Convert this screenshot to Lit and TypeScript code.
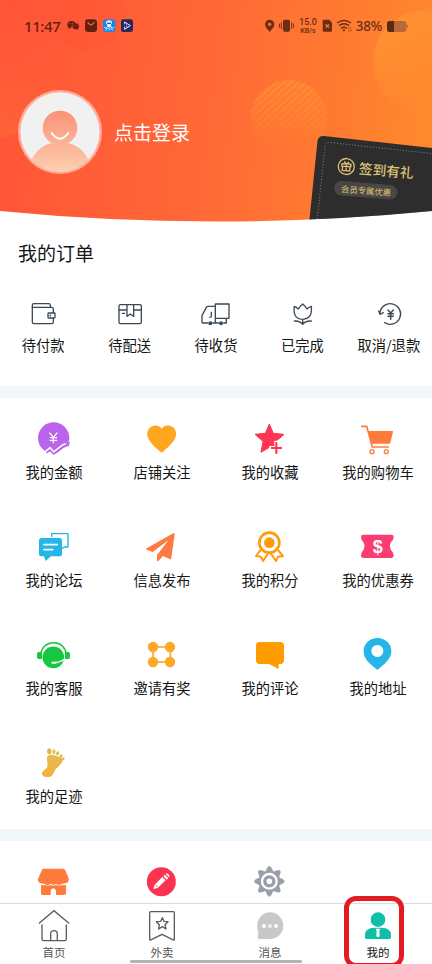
import { LitElement, html, svg, css } from "lit";
import { customElement, property } from "lit/decorators.js";

const CJK = css`"Noto Sans CJK SC", sans-serif`;

/* ---- status bar glyphs ---- */
const statusIcon = (x: number, w: number, body: unknown) =>
  html`<svg width=${w / 3} height="16" viewBox="${x} 54 ${w} 48">${body}</svg>`;

const DARK = "#64200f";
const BROWN = "#6d2f14";

const wechat = statusIcon(198, 54, svg`
  <path fill=${DARK} d="M214 63c8 0 12 4 12 8-9 0-13 5-12 13l-4 0-5 3 1-5c-4-2-4-5-4-8 0-6 5-11 12-11z"/>
  <path fill=${DARK} d="M227 70c6 0 10 4 10 9 0 3-1 5-3 7l1 4-5-2c-8 1-13-3-13-9 0-5 4-9 10-9z"/>
  <g fill="#ff5535"><circle cx="210" cy="70" r="1.6"/><circle cx="218" cy="70" r="1.6"/><circle cx="223" cy="77" r="1.4"/><circle cx="231" cy="77" r="1.4"/></g>`);
const bag = statusIcon(252, 54, svg`
  <rect x="255" y="58" width="36" height="38" rx="9" fill=${DARK}/>
  <path d="M264 68q9 13 18 0" fill="none" stroke="#ff6840" stroke-width="3.4" stroke-linecap="round"/>`);
const octo = statusIcon(306, 54, svg`
  <rect x="309" y="58" width="37" height="38" rx="9" fill="#1b86e8"/>
  <path d="M322 80l-3 5-7-3M333 80l3 5 7-3M323 84l-6 8M332 84l6 8M327.500 80v12" fill="none" stroke="#dff2ff" stroke-width="2.600"/>
  <path d="M327 61c6 0 10 4 9 9l-3 3 1 8h-13l1-7-4-3c-1-6 3-10 9-10z" fill="#dff2ff"/><path d="M321 68h12v4h-12z" fill="#1b62b8"/>`);
const play = statusIcon(360, 54, svg`
  <rect x="363" y="58" width="36" height="38" rx="7" fill="#26285c"/>
  <path d="M374 73v-7l17 11-17 11v-8" fill="none" stroke="#eceaff" stroke-width="3"/><path d="M380 73v10" stroke="#8f9cff" stroke-width="3"/>`);
const pin = statusIcon(138, 42, svg`
  <path fill=${BROWN} fill-rule="evenodd" d="M161 59c8 0 14 6 14 14 0 9-9 16-14 23-5-7-14-14-14-23 0-8 6-14 14-14zm0 9a5 5 0 1 0 .1 0z"/>`);
const vibrate = statusIcon(180, 60, svg`
  <rect x="201" y="59" width="21" height="36" rx="5" fill=${BROWN}/>
  <path d="M196 67v20M227 67v20M190.500 71v12M232.500 71v12" stroke=${BROWN} stroke-width="2.800"/>`);
const sim = statusIcon(312, 45, svg`
  <path fill=${BROWN} d="M323 59h17l8 9v24q0 3-3 3h-22q-3 0-3-3v-30q0-3 3-3z"/>
  <path d="M329 73l10 10m0-10l-10 10" stroke="#ff8a40" stroke-width="3.200"/>`);
const wifi = statusIcon(357, 54, svg`
  <g fill="none" stroke=${BROWN} stroke-width="4.500"><path d="M363 69q21-15 42 0"/><path d="M369 77q15-11 30 0"/><path d="M375 85q9-7 17 0"/></g>
  <path fill=${BROWN} d="M379 89q5-3 9 0l-4 6z"/><path d="M397 83v4M403 82v4M399 91v4M405 89v4" stroke=${BROWN} stroke-width="2.500"/>`);
const battery = statusIcon(507, 75, svg`
  <rect x="513" y="63" width="58" height="33" rx="8" fill="#b8683a"/><path d="M572 73q5 1 5 6t-5 6z" fill="#b8683a"/>
  <path d="M521 63h13v33h-13q-8 0-8-8v-17q0-8 8-8z" fill="#5a2a12"/>`);

/* ---- order shortcuts ---- */
const INK = "#3d4a56";
const orderIcon = (x: number, body: unknown) =>
  html`<svg width="32" height="32" viewBox="${x} 204 96 96"><g fill="none" stroke=${INK} stroke-width="4" stroke-linejoin="round" stroke-linecap="round">${body}</g></svg>`;

const orders = [
  { label: "待付款", icon: orderIcon(82, svg`
    <path d="M98 232v-6q0-5 5-5h44q5 0 5 5v6"/><path d="M98 232h58q5 0 5 5v11M161 266v10q0 5-5 5h-53q-5 0-5-5v-44"/>
    <rect x="145" y="249" width="21" height="15" rx="2"/><circle cx="152" cy="256.500" r="1"/>`) },
  { label: "待配送", icon: orderIcon(341, svg`
    <rect x="356" y="224" width="67" height="57" rx="4"/><path d="M356 240h24M400 240h23M380 224v35l10-7 10 7v-35M366 250h7"/>`) },
  { label: "待收货", icon: orderIcon(600, svg`
    <path d="M646 275v-53h41v43h-8v14h-8M655 279h-17M624 279h-16q-2 0-2-2v-20l13-25q2-3 5-3h22M634 247v11q0 4-5 4M646 265h33"/>
    <circle cx="631" cy="280" r="4" fill=${INK}/><circle cx="663" cy="280" r="4" fill=${INK}/>`) },
  { label: "已完成", icon: orderIcon(859, svg`
    <path d="M884 229c6 2 9 5 12 8 3-6 7-10 13-15 6 5 10 9 13 15 3-3 7-6 13-8 2 23-3 37-26 39-23-2-28-16-25-39zM909 268v15M884 273q17-1 25 10M935 273q-18-1-26 10"/>`) },
  { label: "取消/退款", icon: orderIcon(1118, svg`
    <path d="M1139 248a31 31 0 1 1 14 30M1135 243l4 10 10-5"/>
    <path stroke-width="4.500" d="M1163 240l8 9 8-9M1171 249v19M1163 251h16M1163 259h16"/>`) },
];

/* ---- service shortcuts ---- */
const cellIcon = (x: number, y: number, body: unknown) =>
  html`<svg width="36" height="36" viewBox="${x} ${y} 108 108">${body}</svg>`;

const gear = (cx: number, cy: number) => {
  const pts: string[] = [];
  for (let i = 0; i < 192; i++) {
    const a = (i / 192) * Math.PI * 2;
    const r = 39 + 6.5 * Math.cos(a * 8);
    pts.push(`${(cx + r * Math.cos(a)).toFixed(1)} ${(cy + r * Math.sin(a)).toFixed(1)}`);
  }
  return "M" + pts.join("L") + "Z";
};

const services = [
  { label: "我的金额", icon: cellIcon(108, 30, svg`
    <circle cx="161" cy="84" r="47" fill="#b964ea"/>
    <path d="M148 68l12 14 12-14M160 82v18M149 83h22M149 91h22" fill="none" stroke="#fff" stroke-width="4"/>
    <path d="M127 134l23-12 12 14 28-22 25-11-10 40h-75z" fill="#fff"/>
    <path d="M130 130l20-17 11 13 26-20 20-10" fill="none" stroke="#fff" stroke-width="5"/>
    <path d="M139 129l11-8 11 11 28-22 15-6M195 99l12-1-3 11" fill="none" stroke="#b964ea" stroke-width="4.500"/>`) },
  { label: "店铺关注", icon: cellIcon(432, 30, svg`
    <path fill="#ffa51f" d="M485 56c8-12 24-12 33-5 13 10 13 26 5 38-8 12-20 24-34 36q-4 3-8 0c-14-12-26-23-34-36-8-13-7-29 5-38 10-7 25-7 33 5z"/>`) },
  { label: "我的收藏", icon: cellIcon(108, 30, svg`
    <path fill="#fd3553" stroke="#fd3553" stroke-width="3" stroke-linejoin="round" d="M160 42l12 28 32 3-24 21 7 19-27-1-25 15 6-33-24-21 31-3z"/>
    <path d="M181 92v42M160 114h40" stroke="#fff" stroke-width="12"/><path d="M181 97v34M165 114h33" stroke="#fd3553" stroke-width="6.500"/>`) },
  { label: "我的购物车", icon: cellIcon(432, 30, svg`
    <path d="M437 49h15l17 62h48" fill="none" stroke="#ff7b3c" stroke-width="5" stroke-linecap="round" stroke-linejoin="round"/>
    <path fill="#ff7b3c" d="M456 63h73q3 0 2 3l-8 32q-1 3-4 3h-52z"/>
    <g fill="none" stroke="#ff7b3c" stroke-width="4"><circle cx="468" cy="125" r="6"/><circle cx="511" cy="125" r="6"/></g>`) },
  { label: "我的论坛", icon: cellIcon(108, 354, svg`
    <path d="M155 381v-10h49v40h-11l-7 5" fill="none" stroke="#25b5e6" stroke-width="4" stroke-linejoin="round"/>
    <path fill="#25b5e6" d="M125 384h53q8 0 8 8v39q0 8-8 8h-25l-16 14-5-14h-7q-8 0-8-8v-39q0-8 8-8z"/>
    <path d="M132 404h40M132 419h26" stroke="#fff" stroke-width="5" stroke-linecap="round"/>`) },
  { label: "信息发布", icon: cellIcon(432, 354, svg`
    <path fill="#ff7a42" d="M520 370q4-2 4 3l-10 72q-1 4-5 2l-20-9-14 15q-4 2-4-2v-16l34-44-47 35-18-7q-4-2 0-4z"/>`) },
  { label: "我的积分", icon: cellIcon(108, 354, svg`
    <path d="M135 419l-15 19 15 2 6 13 16-24M185 419l16 19-15 2-6 13-17-24" fill="none" stroke="#ff9c08" stroke-width="6" stroke-linejoin="round"/>
    <circle cx="160" cy="398" r="30" fill="#fff" stroke="#ff9c08" stroke-width="8"/><circle cx="160" cy="398" r="16" fill="#ff9c08"/>`) },
  { label: "我的优惠券", icon: cellIcon(432, 354, svg`
    <path fill="#fb3b72" d="M443 374h82q8 0 8 7 0 9-8 15-6 13 0 25 8 5 8 15 0 8-8 8h-82q-8 0-8-8 0-10 7-15 7-13 0-25-7-6-7-15 0-7 8-7z"/>
    <text x="485" y="428" text-anchor="middle" font-family="Liberation Sans, sans-serif" font-weight="700" font-size="54" fill="#fff">$</text>`) },
  { label: "我的客服", icon: cellIcon(108, 33, svg`
    <circle cx="160" cy="97" r="32.500" fill="#17c741"/><path d="M122 88c3-22 19-35 39-35s35 13 38 35" fill="none" stroke="#17c741" stroke-width="4.500"/>
    <path fill="#17c741" d="M117 81h9v21h-9q-6 0-6-5v-11q0-5 6-5zM195 81h9q6 0 6 5v11q0 5-6 5h-9z"/>
    <path d="M160 113q20 0 34-11" fill="none" stroke="#fff" stroke-width="3.500"/><path d="M157 113h10" stroke="#fff" stroke-width="6" stroke-linecap="round"/>`) },
  { label: "邀请有奖", icon: cellIcon(432, 33, svg`
    <rect x="459" y="66" width="52" height="45" fill="none" stroke="#ffa726" stroke-width="5"/>
    <g fill="#ffa726"><circle cx="459" cy="66" r="15.500"/><circle cx="510" cy="66" r="15.500"/><circle cx="459" cy="111" r="15.500"/><circle cx="510" cy="111" r="15.500"/></g>`) },
  { label: "我的评论", icon: cellIcon(108, 33, svg`
    <path fill="#ff9c00" d="M131 51h62q11 0 11 11v44q0 11-11 11h-5v15l-29-15h-28q-11 0-11-11v-44q0-11 11-11z"/>`) },
  { label: "我的地址", icon: cellIcon(432, 33, svg`
    <path fill="#25b5e6" fill-rule="evenodd" d="M484 39c23 0 42 17 42 39 0 16-9 27-20 38l-22 19-22-19c-11-11-19-22-19-38 0-22 18-39 41-39zm0 21a18 18 0 1 0 .1 0z"/>`) },
  { label: "我的足迹", icon: cellIcon(108, 357, svg`
    <defs><linearGradient id="foot" x1="0" y1="0" x2="0" y2="1"><stop offset="0" stop-color="#e2bd53"/><stop offset="1" stop-color="#f6ae3c"/></linearGradient></defs>
    <path fill="url(#foot)" d="M141 398c2-12 20-10 30-4 10 2 20 5 17 14-4 12-18 19-23 28-5 9-6 16-14 19-11 3-24 0-25-9 0-9 11-11 15-19 4-10-1-20 0-29z"/>
    <g fill="#e0b94e"><ellipse cx="148" cy="379" rx="6.500" ry="9.500"/><ellipse cx="162" cy="380" rx="4.500" ry="7.500"/><ellipse cx="173" cy="385" rx="4.500" ry="6.500" transform="rotate(20 173 385)"/><ellipse cx="183" cy="393" rx="4" ry="5.500" transform="rotate(35 183 393)"/><ellipse cx="190" cy="401" rx="3.500" ry="4.500" transform="rotate(45 190 401)"/></g>`) },
];

const tools = [
  cellIcon(108, 129, svg`
    <path fill="#ff7b3c" d="M132 146h58q3 0 5 3l11 26c2 8-2 14-10 15-4 1-6 2-10 1-7 5-12 5-17 0-5 4-10 4-16 0-7 5-13 5-19 0-4 1-7 0-10-1-8-1-12-7-9-15l11-26q2-3 6-3z"/>
    <path fill="#ff7b3c" d="M123 194q10 3 14 0 8 5 16 0 8 5 16 0 9 5 18 0 4 3 11 0v26q0 5-6 5h-24v-12q-1-8-8-8t-8 8v12h-24q-5 0-5-5z"/>`),
  cellIcon(432, 129, svg`
    <circle cx="484" cy="185" r="43.500" fill="#fb3350"/>
    <path fill="#fff" d="M460 207l4-13 23-23 10 10-24 23zM490 168l4-4 11 10-5 5zM497 162q3-4 7 0l4 4q2 3-1 6z"/>
    <path d="M466 194l8 8" stroke="#fb3350" stroke-width="2"/>`),
  cellIcon(108, 129, svg`
    <path d=${gear(160, 184)} fill="#999ea9"/><circle cx="160" cy="184" r="22" fill="#999ea9" stroke="#fff" stroke-width="7"/><circle cx="160" cy="184" r="8.500" fill="#fff"/>`),
];

/* ---- bottom tabs ---- */
const LINE = "#5c5c5e";
const tabIcon = (x: number, body: unknown) =>
  html`<svg width="36" height="36" viewBox="${x} 264 108 108">${body}</svg>`;
const tabs = [
  { label: "首页", icon: tabIcon(108, svg`
    <path d="M118 309l44-37 44 37M126 315v42q0 5 5 5h63q5 0 5-5v-42M152 361v-19q0-10 10-10t10 10v19" fill="none" stroke=${LINE} stroke-width="4" stroke-linecap="round"/>`) },
  { label: "外卖", icon: tabIcon(432, svg`
    <path d="M449 359v-81q0-3 3-3h68q3 0 3 3v81q-2 2-5 0l-32-16-32 16q-3 2-5 0zM487 293l5 11 12 1-9 9 3 13-11-7-11 7 2-13-9-9 13-1z" fill="none" stroke=${LINE} stroke-width="4" stroke-linejoin="round"/>`) },
  { label: "消息", icon: tabIcon(108, svg`
    <path fill="#c8c8ca" d="M162 277c22 0 40 18 40 40s-18 40-40 40h-33q-4 0-4-4l2-16c-10-26 4-60 35-60z"/>
    <g fill="#fff"><circle cx="144" cy="318" r="6"/><circle cx="162" cy="318" r="6" opacity=".75"/><circle cx="180" cy="318" r="6"/></g>`) },
  { label: "我的", active: true, icon: tabIcon(432, svg`
    <circle cx="486" cy="299" r="22" fill="#0fbfa8"/><path fill="#0fbfa8" d="M475 323h22c18 0 28 9 28 22v7q0 5-5 5h-68q-5 0-5-5v-7c0-13 10-22 28-22z"/>
    <path fill="#fff" d="M479 326h14l-3 7 1 16-5 3-5-3 1-16z"/>`) },
];

@customElement("icon-tile")
class IconTile extends LitElement {
  @property() label = "";
  @property({ attribute: false }) icon: unknown;
  static styles = css`
    :host { display: flex; flex-direction: column; align-items: center; white-space: nowrap;
      font: 14.3px/20px ${CJK}; color: #161616; }
    .icon { display: block; line-height: 0; }
    .label { margin-top: var(--label-gap, 6px); }
  `;
  render() {
    return html`<span class="icon">${this.icon}</span><span class="label">${this.label}</span>`;
  }
}

@customElement("member-banner")
class MemberBanner extends LitElement {
  static styles = css`
    :host { display: block; position: relative; height: 222px; overflow: hidden; }
    .art { position: absolute; inset: 0; }
    .status { position: relative; display: flex; align-items: center; justify-content: space-between;
      height: 16px; padding: 18px 22px 0 24px; color: #64200f; }
    .side { display: flex; height: 16px; align-items: center; }
    .side svg { display: block; }
    .time { width: 42px; font: 500 15px/16px "Noto Sans", sans-serif; letter-spacing: -0.4px; }
    .rate { display: flex; flex-direction: column; align-items: center; width: 24px; font: 500 8.8px/9px Roboto, sans-serif; color: #6d2f14; }
    .rate .unit { font-size: 7.2px; line-height: 8px; }
    .percent { width: 32px; text-align: center; font: 500 13.500px/16px "Noto Sans", sans-serif; color: #6d2f14; letter-spacing: -.2px; }
    .user { position: relative; display: flex; align-items: center; gap: 12px; padding: 56px 0 0 18px; }
    .user svg { display: block; }
    .login { font: 19px/28px ${CJK}; color: #fff; }
  `;
  render() {
    return html`
      <svg class="art" width="432" height="222" viewBox="0 0 432 222">
        <defs>
          <linearGradient id="bg" gradientUnits="userSpaceOnUse" x1="0" y1="100" x2="432" y2="150">
            <stop offset="0" stop-color="#ff5538"/><stop offset=".45" stop-color="#ff6737"/><stop offset=".75" stop-color="#ff7931"/><stop offset="1" stop-color="#ff8a2d"/>
          </linearGradient>
          <linearGradient id="blob" x1="0" y1="0" x2=".7" y2="1"><stop offset="0" stop-color="#ff9635"/><stop offset="1" stop-color="#ff8b2c" stop-opacity="0"/></linearGradient>
          <linearGradient id="leftblob" x1=".7" y1="0" x2=".3" y2="1"><stop offset="0" stop-color="#ff5138" stop-opacity=".2"/><stop offset="1" stop-color="#ff6f38"/></linearGradient>
          <linearGradient id="fade" x1="0" y1="0" x2="0" y2="1"><stop offset="0" stop-color="#ff9a30" stop-opacity=".3"/><stop offset=".9" stop-color="#ff9030" stop-opacity="0"/></linearGradient>
          <linearGradient id="veil" x1="0" y1="0" x2="0" y2="1"><stop offset="0" stop-color="#fff"/><stop offset=".45" stop-color="#999"/><stop offset=".85" stop-color="#000"/></linearGradient>
          <mask id="topfade"><circle cx="289" cy="118" r="38" fill="url(#veil)"/></mask>
          <pattern id="stripes" width="5" height="5" patternUnits="userSpaceOnUse" patternTransform="rotate(-42)"><rect width="5" height="2.200" fill="#ffa63a" opacity=".36"/></pattern>
          <clipPath id="curve"><path d="M0 0H432V211Q216 232 0 211Z"/></clipPath>
        </defs>
        <g clip-path="url(#curve)">
          <rect width="432" height="222" fill="url(#bg)"/>
          <circle cx="-9" cy="67" r="71" fill="url(#leftblob)" opacity=".65"/>
          <circle cx="88" cy="11" r="39" fill="#ff4932" opacity=".2"/>
          <circle cx="424" cy="62" r="51" fill="url(#blob)"/>
          <circle cx="289" cy="118" r="38" fill="url(#fade)"/>
          <rect x="250" y="79" width="78" height="78" fill="url(#stripes)" mask="url(#topfade)"/>
          <path d="M309 224L317.500 141Q318.500 135.500 324 136L436 148.500V224Z" fill="#2d2d2e"/>
          <path d="M317 222L325 147Q325.500 142 330 142.500L436 154" fill="none" stroke="#777" stroke-width="1" stroke-dasharray="1.200 1.800"/>
          <g transform="translate(346.300 166.500) rotate(5)" fill="none" stroke="#dfc273" stroke-width="1.300">
            <circle r="8"/><path d="M-4.500-2.500h9v2.500h-9zM-3.700 0v4.200h7.400V0M0-2.500v6.700M0-2.500l-2.500-2.300M0-2.500l2.500-2.300"/>
          </g>
          <text transform="translate(358.500 173.500) rotate(5)" font-family="Noto Sans CJK SC, sans-serif" font-size="13.700" font-weight="500" fill="#dfc273">签到有礼</text>
          <g transform="rotate(4.500 366 190.500)"><rect x="334" y="183" width="63.500" height="14.500" rx="7.250" fill="#494746"/>
          <text x="341" y="194" font-family="Noto Sans CJK SC, sans-serif" font-size="8.400" fill="#dfc273">会员专属优惠</text></g>
        </g>
      </svg>
      <div class="status">
        <div class="side"><span class="time">11:47</span>${wechat}${bag}${octo}${play}</div>
        <div class="side">${pin}${vibrate}<div class="rate"><span>15.0</span><span class="unit">KB/s</span></div>${sim}${wifi}<span class="percent">38%</span>${battery}</div>
      </div>
      <div class="user">
        <svg width="84" height="84" viewBox="54 60 252 252">
          <defs><linearGradient id="head" x1="0" y1="0" x2="0" y2="1"><stop offset="0" stop-color="#f99277"/><stop offset="1" stop-color="#fcb498"/></linearGradient>
          <linearGradient id="torso" x1="0" y1="0" x2="0" y2="1"><stop offset="0" stop-color="#fcb193"/><stop offset="1" stop-color="#fdd2b4"/></linearGradient>
          <clipPath id="face"><circle cx="180" cy="186" r="120"/></clipPath></defs>
          <circle cx="180" cy="186" r="126" fill="#ffab98"/><circle cx="180" cy="186" r="119" fill="#f1f1f1"/>
          <g clip-path="url(#face)"><path fill="url(#torso)" d="M92 276C106 240 134 223 156 219q24 7 48 0C232 226 256 244 268 276V312H92Z"/>
          <path fill="url(#head)" d="M180 122c31 0 52 24 52 52 0 21-12 38-28 45q-24 9-48 0c-17-8-28-24-28-45 0-28 21-52 52-52z"/>
          <path d="M155 189q25 34 50 0" fill="none" stroke="#fff" stroke-width="6" stroke-linecap="round"/></g>
        </svg>
        <span class="login">点击登录</span>
      </div>`;
  }
}

@customElement("tab-bar")
class TabBar extends LitElement {
  static styles = css`
    :host { display: block; position: absolute; left: 0; right: 0; bottom: 0; height: 60px; background: #fff; border-top: 1px solid #dcdcdc; }
    .tabs { display: grid; grid-template-columns: repeat(4, 1fr); padding-top: 4px; }
    .tab { display: flex; flex-direction: column; align-items: center; font: 11.5px/16px ${CJK}; color: #555; }
    .tab svg { display: block; }
    .tab.active { color: #111; }
    .grip { position: absolute; left: 130px; bottom: 1px; width: 172px; height: 3px; border-radius: 2px; background: #b3b3b3; }
    .mark { position: absolute; left: 344px; top: -8px; width: 50px; height: 62px; border: 5px solid #e31b23; border-radius: 12px; }
  `;
  render() {
    return html`<div class="tabs">${tabs.map(t => html`<div class="tab ${t.active ? "active" : ""}">${t.icon}<span>${t.label}</span></div>`)}</div>
      <div class="grip"></div><div class="mark"></div>`;
  }
}

@customElement("app-root")
class AppRoot extends LitElement {
  static styles = css`
    :host { display: block; position: relative; width: 432px; height: 964px; overflow: hidden; background: #fff; }
    .orders { height: 164px; }
    .title { margin: 0; padding: 17px 0 0 18px; font: 19px/28px ${CJK}; color: #161616; }
    .order-row { display: grid; grid-template-columns: repeat(5, 1fr); padding-top: 31px; --label-gap: 5px; }
    .strip { height: 12px; background: #f2f7fa; }
    .grid { display: grid; grid-template-columns: repeat(4, 1fr); grid-auto-rows: 108px; padding-top: 22px; height: 409px; }
    .tools { display: grid; grid-template-columns: repeat(4, 1fr); justify-items: center; padding-top: 22px; }
  `;
  render() {
    return html`
      <member-banner></member-banner>
      <section class="orders">
        <h2 class="title">我的订单</h2>
        <div class="order-row">${orders.map(o => html`<icon-tile .label=${o.label} .icon=${o.icon}></icon-tile>`)}</div>
      </section>
      <div class="strip"></div>
      <section class="grid">${services.map(s => html`<icon-tile .label=${s.label} .icon=${s.icon}></icon-tile>`)}</section>
      <div class="strip"></div>
      <section class="tools">${tools}</section>
      <tab-bar></tab-bar>`;
  }
}
